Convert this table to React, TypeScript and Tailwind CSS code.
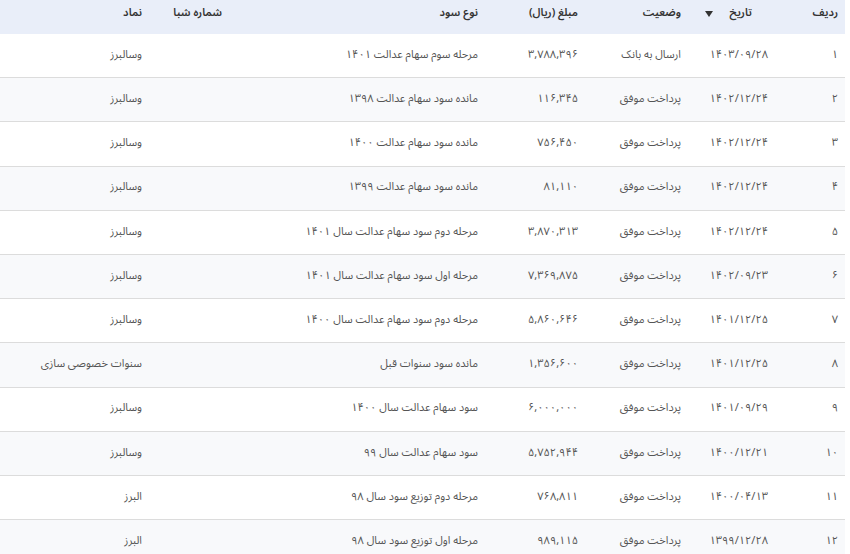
const rows: [string, string, string, string, string, string, string][] = [
  ['۱', '۱۴۰۳/۰۹/۲۸', 'ارسال به بانک', '۳,۷۸۸,۳۹۶', 'مرحله سوم سهام عدالت ۱۴۰۱', '', 'وسالبرز'],
  ['۲', '۱۴۰۲/۱۲/۲۴', 'پرداخت موفق', '۱۱۶,۳۴۵', 'مانده سود سهام عدالت ۱۳۹۸', '', 'وسالبرز'],
  ['۳', '۱۴۰۲/۱۲/۲۴', 'پرداخت موفق', '۷۵۶,۴۵۰', 'مانده سود سهام عدالت ۱۴۰۰', '', 'وسالبرز'],
  ['۴', '۱۴۰۲/۱۲/۲۴', 'پرداخت موفق', '۸۱,۱۱۰', 'مانده سود سهام عدالت ۱۳۹۹', '', 'وسالبرز'],
  ['۵', '۱۴۰۲/۱۲/۲۴', 'پرداخت موفق', '۳,۸۷۰,۳۱۳', 'مرحله دوم سود سهام عدالت سال ۱۴۰۱', '', 'وسالبرز'],
  ['۶', '۱۴۰۲/۰۹/۲۳', 'پرداخت موفق', '۷,۳۶۹,۸۷۵', 'مرحله اول سود سهام عدالت سال ۱۴۰۱', '', 'وسالبرز'],
  ['۷', '۱۴۰۱/۱۲/۲۵', 'پرداخت موفق', '۵,۸۶۰,۶۴۶', 'مرحله دوم سود سهام عدالت سال ۱۴۰۰', '', 'وسالبرز'],
  ['۸', '۱۴۰۱/۱۲/۲۵', 'پرداخت موفق', '۱,۳۵۶,۶۰۰', 'مانده سود سنوات قبل', '', 'سنوات خصوصی سازی'],
  ['۹', '۱۴۰۱/۰۹/۲۹', 'پرداخت موفق', '۶,۰۰۰,۰۰۰', 'سود سهام عدالت سال ۱۴۰۰', '', 'وسالبرز'],
  ['۱۰', '۱۴۰۰/۱۲/۲۱', 'پرداخت موفق', '۵,۷۵۲,۹۴۴', 'سود سهام عدالت سال ۹۹', '', 'وسالبرز'],
  ['۱۱', '۱۴۰۰/۰۴/۱۳', 'پرداخت موفق', '۷۶۸,۸۱۱', 'مرحله دوم توزیع سود سال ۹۸', '', 'البرز'],
  ['۱۲', '۱۳۹۹/۱۲/۲۸', 'پرداخت موفق', '۹۸۹,۱۱۵', 'مرحله اول توزیع سود سال ۹۸', '', 'البرز'],
];

const grid = 'grid grid-cols-[70px_87px_103px_100px_256px_80px_149px]';

export default function App() {
  return (
    <div
      dir="rtl"
      className="w-[850px] h-[554px] overflow-hidden bg-white"
      style={{ fontFamily: '"Noto Sans Arabic", "DejaVu Sans", sans-serif' }}
    >
      <div className="w-[845px] mr-auto ml-0">
        <div className={`${grid} h-[34px] bg-[#e9eef9] text-[11px] font-semibold text-[#333] items-center pb-[7px]`}>
          <div className="pr-[7px]">ردیف</div>
          <div className="pr-[23px] flex items-center gap-[16px]">
            <span>تاریخ</span>
            <svg width="8" height="6" viewBox="0 0 8 6">
              <path d="M0 0 L8 0 L4 6 Z" fill="#333" />
            </svg>
          </div>
          <div className="pr-[7px]">وضعیت</div>
          <div className="pr-[7px]">مبلغ (ریال)</div>
          <div className="pr-[7px]">نوع سود</div>
          <div className="pr-[7px]">شماره شبا</div>
          <div className="pr-[7px]">نماد</div>
        </div>
        {rows.map((r, i) => (
          <div
            key={i}
            className={`${grid} h-[44.2px] items-center border-b border-[#dcdcdc] text-[11px] text-[#555] pb-[1px] ${
              i % 2 === 1 ? 'bg-[#f8f9fb]' : 'bg-white'
            }`}
          >
            {r.map((c, j) => (
              <div key={j} className="pr-[7px] whitespace-nowrap">
                {c}
              </div>
            ))}
          </div>
        ))}
      </div>
    </div>
  );
}
